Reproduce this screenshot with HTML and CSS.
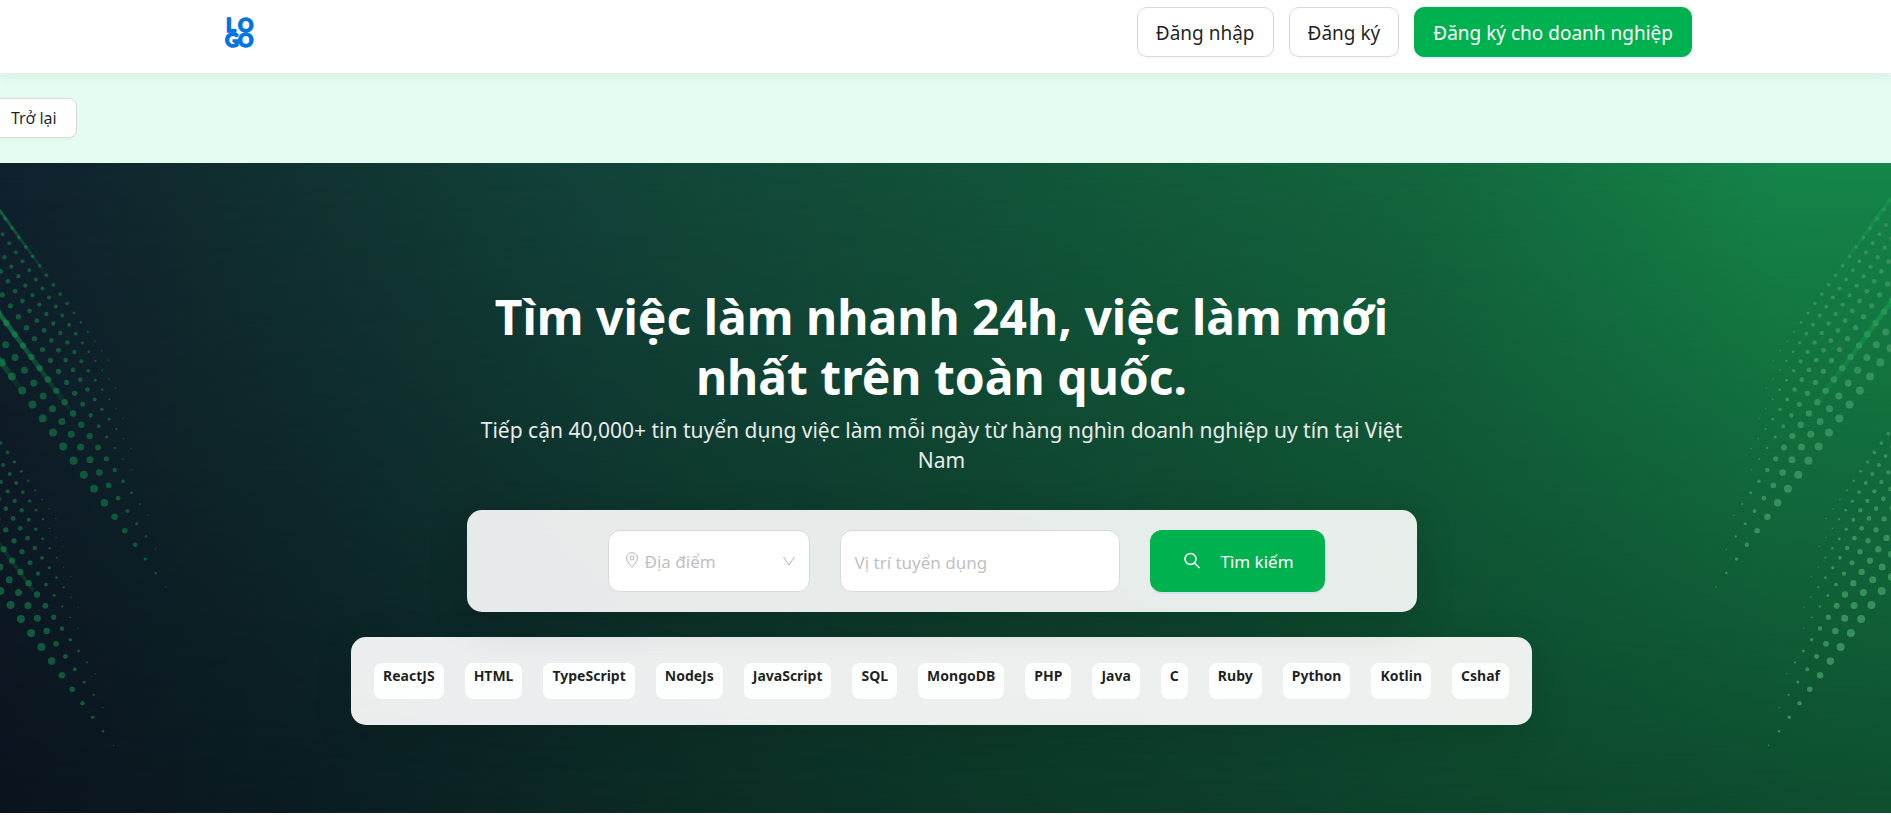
FILE: index.html
```
<!DOCTYPE html>
<html lang="vi">
<head>
<meta charset="utf-8">
<title>Tìm việc làm</title>
<link rel="stylesheet" href="styles.css">
</head>
<body>
<header class="header">
  <a class="logo" href="#" aria-label="LOGO">
    <svg width="30" height="30" viewBox="0 0 30 30" aria-hidden="true">
      <text class="logo-text"><tspan x="1" y="14">L</tspan><tspan x="13" y="14">O</tspan><tspan x="0" y="29">G</tspan><tspan x="13" y="29">O</tspan></text>
    </svg>
  </a>
  <nav class="actions">
    <button class="btn" type="button">Đăng nhập</button>
    <button class="btn" type="button">Đăng ký</button>
    <button class="btn btn-primary" type="button">Đăng ký cho doanh nghiệp</button>
  </nav>
</header>
<div class="back-bar"><button class="back" type="button">Trở lại</button></div>
<main class="hero">
  <svg class="dots dots-left" viewBox="0 9 540 1950" aria-hidden="true">
    <defs>
      <linearGradient id="fade" gradientUnits="userSpaceOnUse" x1="0" y1="360" x2="240" y2="620">
        <stop offset="0" stop-color="#12a04e" stop-opacity=".6"/>
        <stop offset="1" stop-color="#12a04e" stop-opacity="0"/>
      </linearGradient>
      <linearGradient id="fade-top" gradientUnits="userSpaceOnUse" x1="0" y1="118" x2="150" y2="284">
        <stop offset="0" stop-color="#12a04e" stop-opacity=".5"/>
        <stop offset="1" stop-color="#12a04e" stop-opacity="0"/>
      </linearGradient>
      <linearGradient id="fade-low" gradientUnits="userSpaceOnUse" x1="0" y1="480" x2="75" y2="565">
        <stop offset="0" stop-color="#12a04e" stop-opacity=".35"/>
        <stop offset="1" stop-color="#12a04e" stop-opacity="0"/>
      </linearGradient>
    </defs>
    <g transform="scale(1 1.257)">
      <g class="field"></g>
      <path d="M-30 336 19 389 243 632" stroke="url(#fade)" stroke-width="12" fill="none"/>
      <path d="M-30 88 150 286" stroke="url(#fade-top)" stroke-width="8" fill="none"/>
      <path d="M-30 445 80 567" stroke="url(#fade-low)" stroke-width="14" fill="none"/>
      <path d="M-30 885 100 1028" stroke="#12a04e" stroke-opacity=".16" stroke-width="10" fill="none"/>
    </g>
  </svg>
  <svg class="dots dots-right" viewBox="0 9 540 1950" aria-hidden="true">
    <g transform="translate(513 0) scale(-1 1.257)">
      <g class="field"></g>
      <path d="M-30 336 19 389 200 585" stroke="url(#fade)" stroke-width="12" fill="none"/>
      <path d="M-30 88 150 286" stroke="url(#fade-top)" stroke-width="10" fill="none"/>
    </g>
  </svg>
  <div class="intro">
    <h1>Tìm việc làm nhanh 24h, việc làm mới nhất trên toàn quốc.</h1>
    <p>Tiếp cận 40,000+ tin tuyển dụng việc làm mỗi ngày từ hàng nghìn doanh nghiệp uy tín tại Việt Nam</p>
  </div>
  <form class="search">
    <div class="place">
      <svg class="pin" width="14" height="16" viewBox="0 0 14 16" aria-hidden="true"><path d="M7 15.2C5.5 13.4 1.5 9.4 1.5 6a5.5 5.3 0 0 1 11 0c0 3.4-4 7.4-5.5 9.2z"/><circle cx="7" cy="6" r="1.9"/></svg>
      <select aria-label="Địa điểm"><option>Địa điểm</option></select>
      <svg class="chevron" width="14" height="14" viewBox="0 0 14 14" aria-hidden="true"><path d="M1.5 3 7 11l5.5-8"/></svg>
    </div>
    <input class="position" type="text" aria-label="Vị trí tuyển dụng" placeholder="Vị trí tuyển dụng">
    <button class="submit" type="button">
      <svg width="18" height="18" viewBox="0 0 18 18" aria-hidden="true"><circle cx="7.5" cy="7" r="5.5"/><path d="m11.5 11 5 5"/></svg>
      <span>Tìm kiếm</span>
    </button>
  </form>
  <div class="tags">
    <a href="#">ReactJS</a><a href="#">HTML</a><a href="#">TypeScript</a><a href="#">NodeJs</a><a href="#">JavaScript</a><a href="#">SQL</a><a href="#">MongoDB</a><a href="#">PHP</a><a href="#">Java</a><a href="#">C</a><a href="#">Ruby</a><a href="#">Python</a><a href="#">Kotlin</a><a href="#">Cshaf</a>
  </div>
</main>
<script src="dots.js"></script>
</body>
</html>
```
FILE: styles.css
```
* { box-sizing: border-box; }
body {
  margin: 0;
  background: #fff;
  color: rgba(0, 0, 0, .88);
  font-family: "Noto Sans", "Open Sans", sans-serif;
  font-size: 16px;
}
button, input, select { font: inherit; color: inherit; }
a { color: inherit; text-decoration: none; }

.header {
  position: relative;
  z-index: 2;
  display: flex;
  align-items: flex-start;
  justify-content: space-between;
  height: 73px;
  padding: 7px 199px 0 225px;
  background: #fff;
  box-shadow: 0 4px 12px rgba(0, 0, 0, .06);
}
.logo { display: block; padding-top: 11px; line-height: 0; }
.logo svg { overflow: visible; }
.logo-text {
  font: 900 19px Lato, sans-serif;
  fill: #0073e6;
  stroke: #0073e6;
  stroke-width: 1.4;
}
.actions { display: flex; gap: 15px; }
.btn {
  height: 50px;
  padding: 2px 18px 0;
  border: 1px solid #d9d9d9;
  border-radius: 10px;
  background: #fff;
  box-shadow: 0 2px 0 rgba(0, 0, 0, .02);
  font-size: 19px;
}
.btn-primary {
  border-color: #00b14f;
  background: #00b14f;
  box-shadow: 0 2px 0 rgba(5, 145, 255, .1);
  color: #fff;
}

.back-bar { padding: 25px 0; background: #e5fdf0; }
.back {
  display: block;
  height: 40px;
  margin-left: -10px;
  padding: 0 19px 0 20px;
  border: 1px solid #d9d9d9;
  border-radius: 8px;
  background: #fff;
  box-shadow: 0 2px 0 rgba(0, 0, 0, .02);
  font-size: 16px;
}

.hero {
  position: relative;
  z-index: 0;
  display: flex;
  flex-direction: column;
  align-items: center;
  min-height: 650px;
  padding: 124px 8px 88px 0;
  overflow: hidden;
  background: linear-gradient(to right, #10212e, #113230 15%, #12443a 32%, #125239 50%, #13663d 75%, #158549 94%, #158549);
}
.hero::before {
  content: "";
  position: absolute;
  inset: 0;
  z-index: -1;
  background: linear-gradient(to right, #0b131e, #0a1c21 16%, #0b2824 32%, #0c3627 52%, #0d452c 78%, #0e4e2f);
  mask-image: linear-gradient(to bottom, transparent, #000);
}
.dots {
  position: absolute;
  top: 0;
  z-index: -1;
  width: 180px;
  height: 650px;
}
.dots-left { left: 0; fill: #115839; }
.dots-right { right: 0; fill: #378f5b; }

.intro { width: 950px; max-width: 100%; text-align: center; color: #fff; }
.intro h1 { margin: 0; font-size: 48px; line-height: 60px; font-weight: 700; }
.intro p { margin: 8px 0 0; font-size: 21px; line-height: 30px; color: #e8ecea; }

.search {
  position: relative;
  z-index: 1;
  display: flex;
  justify-content: center;
  gap: 30px;
  width: 950px;
  max-width: 100%;
  margin-top: 35px;
  padding: 20px 0 20px 49px;
  border-radius: 15px;
  background: rgba(255, 255, 255, .9);
  box-shadow: 0 10px 40px rgba(0, 0, 0, .16);
}
.place { position: relative; width: 202px; }
.place select, .position {
  width: 100%;
  height: 62px;
  border: 1px solid #d9d9d9;
  border-radius: 12px;
  background: #fff;
  font-size: 17px;
}
.place select { appearance: none; padding: 0 36px; color: #bfbfbf; }
.place svg { position: absolute; fill: none; stroke: #b5b5b5; }
.place .pin { left: 17px; top: 22px; }
.place .chevron { right: 14px; top: 24px; }
.position { width: 280px; padding: 2px 14px 0; }
.position::placeholder { color: #bfbfbf; opacity: 1; }
.submit {
  display: flex;
  align-items: center;
  justify-content: center;
  gap: 19px;
  width: 175px;
  height: 62px;
  padding: 0 0 0 3px;
  border: 0;
  border-radius: 12px;
  background: #00b14f;
  box-shadow: 0 2px 0 rgba(5, 145, 255, .1);
  color: #fff;
  font-size: 17px;
}
.submit svg { fill: none; stroke: #fff; stroke-width: 1.5; }

.tags {
  display: flex;
  gap: 21px;
  margin-top: 25px;
  padding: 26px 23px;
  border-radius: 15px;
  background: rgba(255, 255, 255, .92);
  box-shadow: 0 10px 40px rgba(0, 0, 0, .12);
}
.tags a {
  height: 36px;
  padding: 3px 9px;
  border-radius: 8px;
  background: rgba(255, 255, 255, .9);
  font-size: 14px;
  line-height: 20px;
  font-weight: 700;
}
```
FILE: dots.js
```
// Each row: start point, step, last index, dot radius.
const rows = [
  [5, 483, 30.8, 33.5, 16, 12],
  [17, 441, 28.1, 30.5, 16, 10.5],
  [19, 389, 25, 27, 17, 9.5],
  [7, 322, 24.1, 26.1, 16, 8],
  [2, 266, 21.7, 23.5, 18, 7.2],
  [13, 232, 21, 22.6, 17, 6.5],
  [8, 177, 19.9, 21.6, 17, 6],
  [15, 140, 20.7, 22.5, 15, 5.5]
];
const shifts = [[0, 0], [-158, 378]];

function drawField(group) {
  for (const [sx, sy] of shifts) {
    for (const [x, y, dx, dy, last, size] of rows) {
      for (let i = -2; i <= last; i++) {
        const cx = x + dx * i + sx;
        if (cx < -40) continue;
        const r = Math.max(2, size * Math.min(1, (last - i + 1.5) / 8));
        const dot = document.createElementNS("http://www.w3.org/2000/svg", "ellipse");
        dot.setAttribute("cx", cx);
        dot.setAttribute("cy", y + dy * i + sy);
        dot.setAttribute("rx", r);
        dot.setAttribute("ry", r * 0.8);
        group.append(dot);
      }
    }
  }
}
document.querySelectorAll(".field").forEach(drawField);
```
